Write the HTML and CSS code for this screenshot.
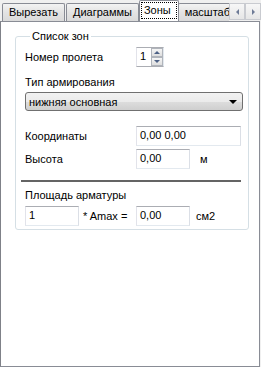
FILE: index.html
```html
<!DOCTYPE html>
<html>
<head>
  <meta charset="UTF-8">
  <title>Зоны</title>
  <link rel="stylesheet" href="styles.css">
</head>
<body>
  <div class="tabs">
    <div class="tab-list">
      <div class="tab">Вырезать</div>
      <div class="tab">Диаграммы</div>
      <div class="tab active"><span class="focus">Зоны</span></div>
      <div class="tab">масштаб</div>
    </div>
    <div class="scroll-btns">
      <div class="scroll-btn"><span class="arr-left"></span></div>
      <div class="scroll-btn"><span class="arr-right"></span></div>
    </div>
  </div>

  <div class="page">
    <fieldset class="group">
      <legend>Список зон</legend>

      <div class="row row-span">
        <span class="label">Номер пролета</span>
        <div class="spinner">
          <span class="spin-value">1</span>
          <div class="spin-btns">
            <div class="spin-btn"><span class="up"></span></div>
            <div class="spin-btn"><span class="down"></span></div>
          </div>
        </div>
      </div>

      <div class="label type-label">Тип армирования</div>
      <div class="combo">
        <span>нижняя основная</span>
        <span class="combo-arrow"></span>
      </div>

      <div class="row row-coord">
        <span class="label">Координаты</span>
        <div class="textbox wide">0,00 0,00</div>
      </div>
      <div class="row row-height">
        <span class="label">Высота</span>
        <div class="textbox">0,00</div>
        <span class="unit">м</span>
      </div>

      <div class="separator"></div>

      <div class="label area-label">Площадь арматуры</div>
      <div class="row row-area">
        <div class="textbox small">1</div>
        <span class="mult">* Amax =</span>
        <div class="textbox">0,00</div>
        <span class="unit unit-cm">см2</span>
      </div>
    </fieldset>
  </div>
</body>
</html>
```

FILE: styles.css
```css
html, body {
  margin: 0;
  padding: 0;
  background: #f0f0f0;
}

body {
  width: 261px;
  height: 367px;
  font-family: Tahoma, "Liberation Sans", Arial, sans-serif;
  font-size: 11px;
  color: #000;
  overflow: hidden;
}

/* вкладки */
.tabs {
  display: flex;
  height: 21px;
  position: relative;
  z-index: 1;
}

.tab-list {
  display: flex;
  align-items: flex-end;
  width: 228px;
  overflow: hidden;
  padding-left: 2px;
}

.tab {
  height: 17px;
  line-height: 17px;
  padding: 0 6px;
  border: 1px solid #898c95;
  border-bottom: none;
  border-radius: 2px 2px 0 0;
  background: linear-gradient(#f3f3f3, #e3e3e3 50%, #dadada);
  white-space: nowrap;
  margin-right: 1px;
}

.tab.active {
  height: 21px;
  line-height: 19px;
  margin: 0 -1px -1px -1px;
  padding: 0 2px;
  background: #fff;
  border-color: #898c95;
}

.focus {
  display: inline-block;
  line-height: 15px;
  padding: 0 5px 0 2px;
  outline: 1px dotted #000;
}

.scroll-btns {
  display: flex;
  margin-top: 3px;
  height: 16px;
}

.scroll-btn {
  width: 14px;
  height: 15px;
  border: 1px solid #c9cbd0;
  background: linear-gradient(#f7f7f7, #e6e6e6);
  display: flex;
  align-items: center;
  justify-content: center;
}

.arr-left {
  border-right: 3px solid #6e7b96;
  border-top: 3px solid transparent;
  border-bottom: 3px solid transparent;
}

.arr-right {
  border-left: 3px solid #6e7b96;
  border-top: 3px solid transparent;
  border-bottom: 3px solid transparent;
}

/* страница */
.page {
  background: #fff;
  border: 1px solid #898c95;
  border-left-color: #7f8188;
  box-sizing: border-box;
  height: 346px;
  width: 260px;
  padding: 8px 12px 0 14px;
}

.group {
  margin: 0;
  height: 200px;
  box-sizing: border-box;
  border: 1px solid #d5dfe5;
  border-radius: 3px;
  padding: 4px 5px 0 9px;
}

.group legend {
  padding: 0 2px;
  margin-left: 5px;
}

.label {
  white-space: nowrap;
}

.row {
  display: flex;
  align-items: center;
}

.row .label {
  width: 111px;
}

.row-span {
  height: 21px;
}

.spinner {
  display: flex;
  width: 28px;
  height: 20px;
  box-sizing: border-box;
  border: 1px solid #abadb3;
  border-right-color: #e3e9ef;
  border-left-color: #e2e3ea;
}

.spin-value {
  flex: 1;
  padding-left: 3px;
  line-height: 17px;
}

.spin-btns {
  width: 12px;
  display: flex;
  flex-direction: column;
}

.spin-btn {
  flex: 1;
  border: 1px solid #b0b4bb;
  background: linear-gradient(#f6f6f6, #dedede);
  display: flex;
  align-items: center;
  justify-content: center;
}

.spin-btn .up {
  border-bottom: 3px solid #4d6185;
  border-left: 3px solid transparent;
  border-right: 3px solid transparent;
}

.spin-btn .down {
  border-top: 3px solid #4d6185;
  border-left: 3px solid transparent;
  border-right: 3px solid transparent;
}

.type-label {
  margin-top: 9px;
}

.combo {
  margin-top: 4px;
  height: 19px;
  width: 218px;
  box-sizing: border-box;
  border: 1px solid #707070;
  border-radius: 3px;
  background: linear-gradient(#f2f2f2, #ebebeb 50%, #dddddd 51%, #cfcfcf);
  display: flex;
  align-items: center;
  justify-content: space-between;
  padding: 0 5px 0 3px;
}

.combo-arrow {
  border-top: 4px solid #000;
  border-left: 4px solid transparent;
  border-right: 4px solid transparent;
  margin-top: 1px;
}

.textbox {
  width: 54px;
  height: 20px;
  box-sizing: border-box;
  border: 1px solid #abadb3;
  border-left-color: #e2e3ea;
  border-right-color: #dbdfe6;
  border-bottom-color: #e3e9ef;
  padding-left: 3px;
  line-height: 17px;
  background: #fff;
}

.textbox.wide {
  width: 105px;
}

.row-coord {
  margin-top: 15px;
}

.row-height {
  margin-top: 3px;
}

.unit {
  margin-left: 10px;
}

.separator {
  margin: 11px 0 0 -4px;
  width: 220px;
  height: 2px;
  background: #646464;
}

.area-label {
  margin-top: 7px;
}

.row-area {
  margin-top: 5px;
}

.textbox.small {
  width: 54px;
}

.mult {
  width: 57px;
  padding-left: 4px;
  box-sizing: border-box;
}

.unit-cm {
  margin-left: 6px;
}
```
